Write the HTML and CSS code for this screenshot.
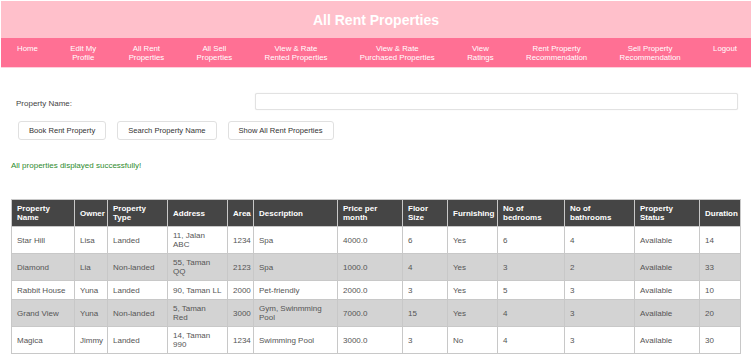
FILE: index.html
```html
<!doctype html>
<html>
<head>
  <meta charset='utf-8'>
  <title>All Rent Properties</title>
  <link rel="stylesheet" href="styles.css">
</head>
<body>
<div id='page'>
  <div id='banner'>All Rent Properties</div>
  <div id='nav'>
    <a href='#'>Home</a>
    <a href='#'>Edit My<br>Profile</a>
    <a href='#'>All Rent<br>Properties</a>
    <a href='#'>All Sell<br>Properties</a>
    <a href='#'>View &amp; Rate<br>Rented Properties</a>
    <a href='#'>View &amp; Rate<br>Purchased Properties</a>
    <a href='#'>View<br>Ratings</a>
    <a href='#'>Rent Property<br>Recommendation</a>
    <a href='#'>Sell Property<br>Recommendation</a>
    <a href='#'>Logout</a>
  </div>
  <div id='main'>
    <div class='field'>
      <label for='pname'>Property Name:</label>
      <input id='pname' type='text'>
    </div>
    <div class='btns'>
      <button>Book Rent Property</button>
      <button>Search Property Name</button>
      <button>Show All Rent Properties</button>
    </div>
    <p class='msg'>All properties displayed successfully!</p>
    <table id='list'>
      <colgroup>
        <col style='width:63px'><col style='width:33px'><col style='width:60px'><col style='width:60px'>
        <col style='width:26px'><col style='width:84px'><col style='width:65px'><col style='width:45px'>
        <col style='width:50px'><col style='width:67px'><col style='width:70px'><col style='width:65px'>
        <col style='width:41px'>
      </colgroup>
      <tr>
        <th>Property Name</th><th>Owner</th><th>Property Type</th><th>Address</th><th>Area</th>
        <th>Description</th><th>Price per month</th><th>Floor Size</th><th>Furnishing</th>
        <th>No of bedrooms</th><th>No of bathrooms</th><th>Property Status</th><th>Duration</th>
      </tr>
      <tr>
        <td>Star Hill</td><td>Lisa</td><td>Landed</td><td>11, Jalan ABC</td><td>1234</td><td>Spa</td>
        <td>4000.0</td><td>6</td><td>Yes</td><td>6</td><td>4</td><td>Available</td><td>14</td>
      </tr>
      <tr>
        <td>Diamond</td><td>Lia</td><td>Non-landed</td><td>55, Taman QQ</td><td>2123</td><td>Spa</td>
        <td>1000.0</td><td>4</td><td>Yes</td><td>3</td><td>2</td><td>Available</td><td>33</td>
      </tr>
      <tr>
        <td>Rabbit House</td><td>Yuna</td><td>Landed</td><td>90, Taman LL</td><td>2000</td><td>Pet-friendly</td>
        <td>2000.0</td><td>3</td><td>Yes</td><td>5</td><td>3</td><td>Available</td><td>10</td>
      </tr>
      <tr>
        <td>Grand View</td><td>Yuna</td><td>Non-landed</td><td>5, Taman Red</td><td>3000</td><td>Gym, Swinmming Pool</td>
        <td>7000.0</td><td>15</td><td>Yes</td><td>4</td><td>3</td><td>Available</td><td>20</td>
      </tr>
      <tr>
        <td>Magica</td><td>Jimmy</td><td>Landed</td><td>14, Taman 990</td><td>1234</td><td>Swimming Pool</td>
        <td>3000.0</td><td>3</td><td>No</td><td>4</td><td>3</td><td>Available</td><td>30</td>
      </tr>
    </table>
  </div>
</div>
</body>
</html>
```

FILE: styles.css
```css
*{margin:0;padding:0;box-sizing:border-box;}
body{font-family:"Liberation Sans",Arial,sans-serif;font-size:8px;color:#444;background:#fff;}
#page{padding:1px 1px 0 1px;}
#banner{background:#ffc0cb;height:37px;display:flex;align-items:center;justify-content:center;color:#fff;font-size:14px;font-weight:bold;}
#nav{background:#ff7094;height:30px;display:flex;justify-content:space-between;align-items:flex-start;padding:6px 14px 0 16px;border-bottom:1px solid #ffd0dc;}
#nav a{color:#fff;text-decoration:none;text-align:center;line-height:9px;font-size:7.8px;}
#main{padding:0 11px 0 10px;}
.field{display:flex;align-items:center;margin-top:25px;}
.field label{width:244px;padding:3px 0 0 5px;color:#444;}
.field input{flex:1;height:17px;border:1px solid #e2e2e2;border-radius:2px;box-shadow:0 0 1px #ddd;margin-right:2px;}
.btns{display:flex;gap:11px;margin:11px 0 0 7px;}
.btns button{height:19px;padding:0 10px;background:#fff;border:1px solid #e0e0e0;border-radius:3px;font-family:inherit;font-size:7.6px;color:#333;}
.msg{color:#2e8b2e;margin-top:21px;line-height:9px;}
#list{border-collapse:collapse;table-layout:fixed;width:729px;margin-top:29px;}
#list th,#list td{border:1px solid #c8c8c8;padding:4px 5px;line-height:9px;text-align:left;vertical-align:middle;}
#list th{background:#454545;color:#fff;font-weight:bold;}
#list td{color:#555;height:19px;}
#list tr:nth-child(odd) td{background:#d3d3d3;}
```
